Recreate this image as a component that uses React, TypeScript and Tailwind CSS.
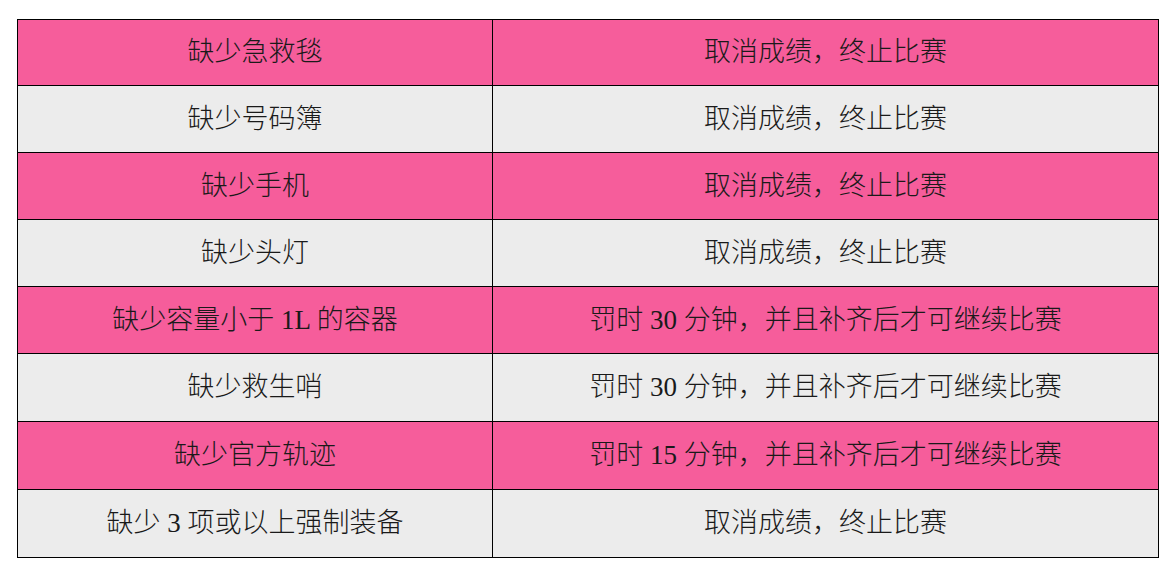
const rows: [string, string][] = [
  ["缺少急救毯", "取消成绩，终止比赛"],
  ["缺少号码簿", "取消成绩，终止比赛"],
  ["缺少手机", "取消成绩，终止比赛"],
  ["缺少头灯", "取消成绩，终止比赛"],
  ["缺少容量小于 1L 的容器", "罚时 30 分钟，并且补齐后才可继续比赛"],
  ["缺少救生哨", "罚时 30 分钟，并且补齐后才可继续比赛"],
  ["缺少官方轨迹", "罚时 15 分钟，并且补齐后才可继续比赛"],
  ["缺少 3 项或以上强制装备", "取消成绩，终止比赛"],
];

const heights = ["h-[65px]", "h-[67px]", "h-[67px]", "h-[67px]", "h-[67px]", "h-[68px]", "h-[68px]", "h-[68px]"];

export default function App() {
  return (
    <div className="min-h-screen bg-white pl-[17px] pt-[19px]">
      <div
        className="w-[1142px] border border-black text-[27px] font-light text-[#1a1a1a]"
        style={{ fontFamily: '"Liberation Serif", "Noto Sans CJK SC", serif' }}
      >
        {rows.map(([item, penalty], i) => (
          <div
            key={i}
            className={`grid grid-cols-[475px_1fr] ${heights[i]} ${i > 0 ? "border-t border-black" : ""} ${
              i % 2 === 0 ? "bg-[#f65d9b]" : "bg-[#ececec]"
            }`}
          >
            <div className="flex items-center justify-center border-r border-black">{item}</div>
            <div className="flex items-center justify-center">{penalty}</div>
          </div>
        ))}
      </div>
    </div>
  );
}
